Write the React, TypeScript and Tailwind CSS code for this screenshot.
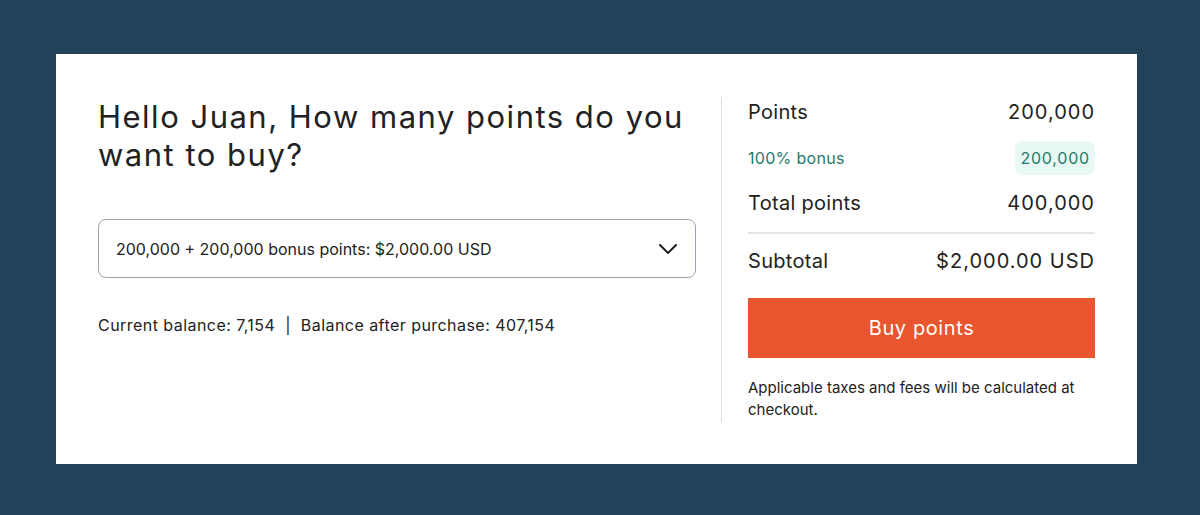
import React from 'react';

const Row: React.FC<{ label: string; value: string }> = ({ label, value }) => (
  <div className="flex items-center justify-between text-[20px] leading-[28px] text-[#222222]">
    <span className="tracking-[0.3px]">{label}</span>
    <span className="tracking-[1px]">{value}</span>
  </div>
);

export default function App() {
  return (
    <div
      className="w-[1200px] h-[515px] bg-[#21435a] pt-[54px] pl-[56px]"
      style={{ fontFamily: 'Inter, "Open Sans", sans-serif' }}
    >
      <div className="w-[1081px] h-[410px] bg-white flex px-[42px] pt-[43px]">
        {/* left */}
        <div className="w-[598px] pt-[1px]">
          <h1 className="text-[31px] leading-[38px] text-[#222222] tracking-[1.5px]">
            Hello Juan, How many points do you
            <br />
            want to buy?
          </h1>
          <button className="mt-[45px] w-full h-[59px] border border-[#9ca3af] rounded-[8px] flex items-center justify-between pl-[17px] pr-[17px] text-[16px] text-[#222222]">
            <span>200,000 + 200,000 bonus points: $2,000.00 USD</span>
            <svg width="20" height="20" viewBox="0 0 20 20" fill="none">
              <path d="M2 6 L10 14 L18 6" stroke="#222222" strokeWidth="2" strokeLinecap="round" strokeLinejoin="round" />
            </svg>
          </button>
          <p className="mt-[35px] text-[16px] leading-[24px] text-[#222222] tracking-[0.45px]">
            Current balance: 7,154 &nbsp;|&nbsp; Balance after purchase: 407,154
          </p>
        </div>

        {/* divider */}
        <div className="ml-[25px] w-px h-[325px] bg-[#dcdcdc]" />

        {/* right */}
        <div className="ml-[26px] w-[347px]">
          <div className="mt-[1px]">
            <Row label="Points" value="200,000" />
          </div>
          <div className="mt-[15px] flex items-center justify-between text-[16px] text-[#1f7a6d]">
            <span className="tracking-[0.3px]">100% bonus</span>
            <span className="bg-[#e8f8f5] rounded-[8px] px-[5px] h-[34px] flex items-center tracking-[0.8px]">200,000</span>
          </div>
          <div className="mt-[14px]">
            <Row label="Total points" value="400,000" />
          </div>
          <div className="mt-[15px] h-[2px] bg-[#e3e5e6]" />
          <div className="mt-[13px]">
            <Row label="Subtotal" value="$2,000.00 USD" />
          </div>
          <button className="mt-[23px] w-full h-[60px] bg-[#e8552f] text-white text-[20px] tracking-[0.6px]">
            Buy points
          </button>
          <p className="mt-[19px] text-[15px] leading-[22px] text-[#222222]">
            Applicable taxes and fees will be calculated at checkout.
          </p>
        </div>
      </div>
    </div>
  );
}
